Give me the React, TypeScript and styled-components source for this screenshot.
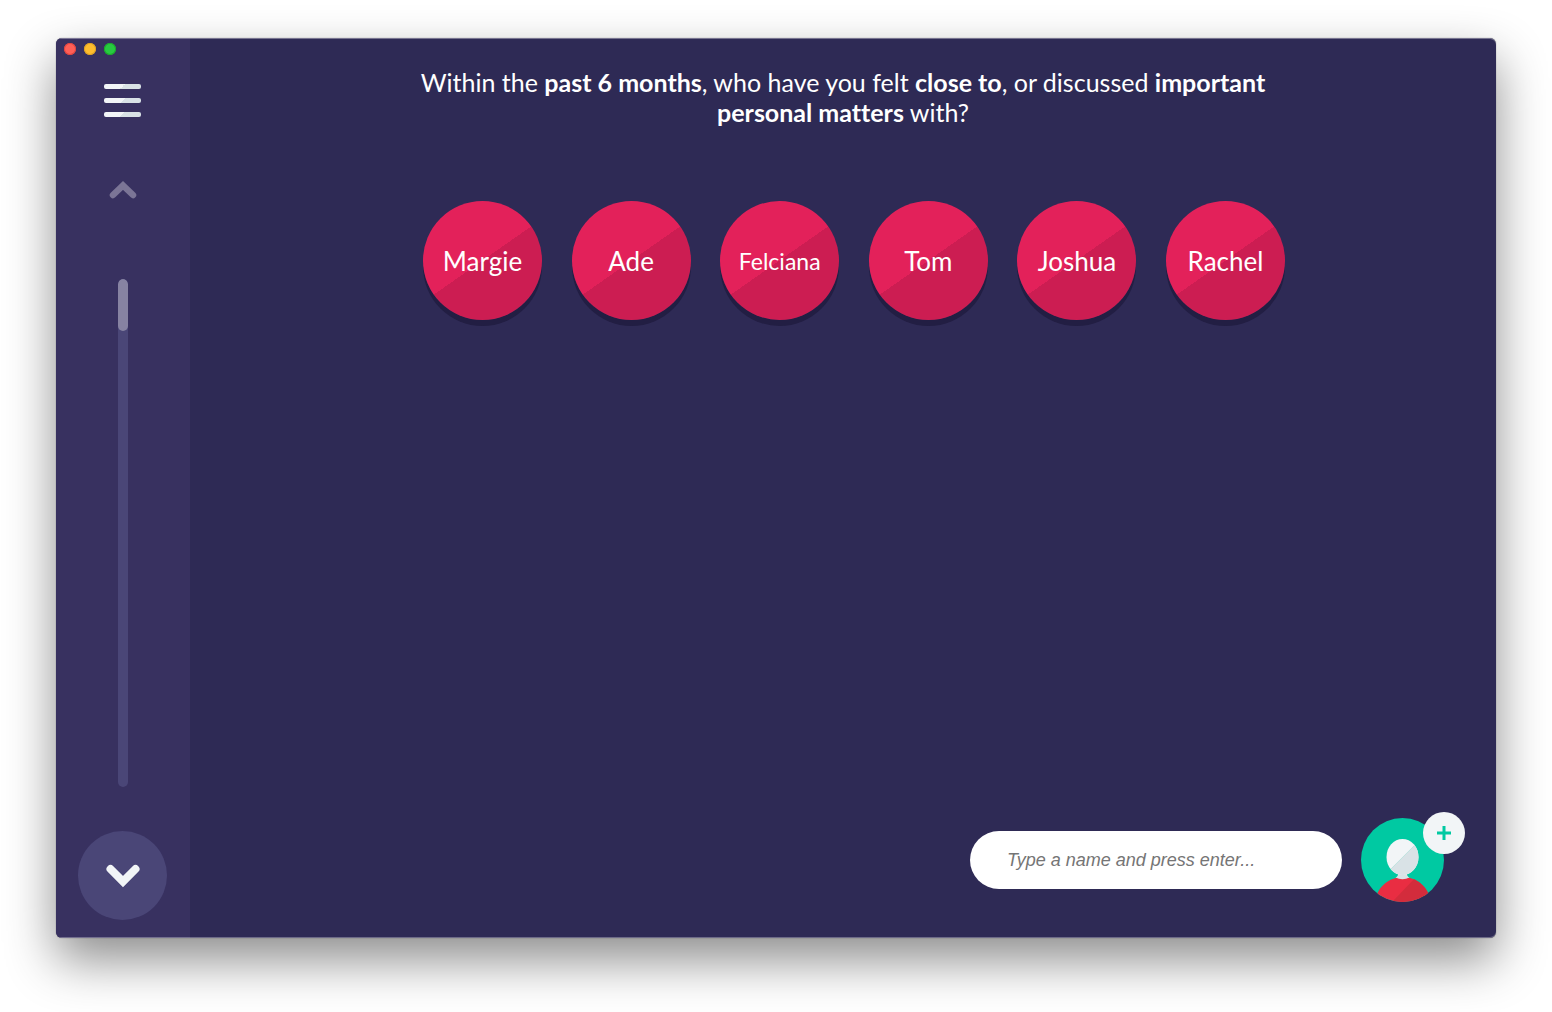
import React, { useState } from "react";
import styled, { createGlobalStyle } from "styled-components";

const GlobalStyle = createGlobalStyle`
  *, *::before, *::after { box-sizing: border-box; }
  body { margin: 0; background: #fff; font-family: Lato, sans-serif; }
  button { border: 0; padding: 0; background: none; font: inherit; cursor: pointer; }
`;

const Desktop = styled.div`
  display: flex;
  min-height: 100vh;
  padding: 38px 56px 74px;
`;

const Window = styled.div`
  flex: 1;
  display: flex;
  border-radius: 6px;
  overflow: hidden;
  background: #2e2a55;
  box-shadow: 0 0 1px rgba(0, 0, 0, 0.6), 0 22px 50px rgba(0, 0, 0, 0.45),
    inset 0 1px 0 rgba(255, 255, 255, 0.35), inset 0 -1px 0 rgba(255, 255, 255, 0.3);
`;

const Sidebar = styled.nav`
  flex: none;
  width: 134px;
  padding: 5px 9px 18px 8px;
  display: flex;
  flex-direction: column;
  align-items: center;
  background: #383160;
  box-shadow: inset 0 1px 0 rgba(255, 255, 255, 0.35), inset 0 -1px 0 rgba(255, 255, 255, 0.3);
`;

const Lights = styled.div`
  align-self: flex-start;
  display: flex;
  gap: 8px;
`;

const Light = styled.button<{ $fill: string; $edge: string }>`
  width: 12px;
  height: 12px;
  border-radius: 50%;
  background: ${(p) => p.$fill};
  box-shadow: inset 0 0 0 1px ${(p) => p.$edge};
`;

const MenuButton = styled.button`
  margin-top: 29px;
  display: grid;
  gap: 9px;
`;

const MenuBar = styled.span`
  width: 37px;
  height: 5px;
  border-radius: 2px;
  background: linear-gradient(135deg, #f2f5f7 50%, #d9e2e6 50%);
`;

const BackButton = styled.button`
  margin-top: 64px;
  height: 18px;
  color: #7b7596;
  svg { display: block; }
`;

const Track = styled.div`
  flex: 1;
  width: 10px;
  margin: 80px 0 44px;
  border-radius: 5px;
  overflow: hidden;
  background: #4a4677;
`;

const TrackFill = styled.div`
  border-radius: 5px;
  background: #8783a2;
`;

const NextButton = styled.button`
  width: 89px;
  height: 89px;
  border-radius: 50%;
  display: grid;
  place-items: center;
  background: #4a4677;
  color: #f2f5f7;
`;

const Main = styled.main`
  flex: 1;
  min-width: 0;
  display: flex;
  flex-direction: column;
  padding: 29px 31px 36px;
`;

const Prompt = styled.h1`
  max-width: 880px;
  margin: 0 auto;
  color: #fff;
  font-size: 25px;
  font-weight: 400;
  font-variant-ligatures: none;
  line-height: 30px;
  text-align: center;
`;

const People = styled.ul`
  flex: 1;
  display: flex;
  align-content: flex-start;
  align-items: flex-start;
  justify-content: space-between;
  width: 100%;
  max-width: 884px;
  margin: 74px auto 0;
  padding: 0 0 0 22px;
  list-style: none;
`;

const Person = styled.li<{ $small?: boolean }>`
  width: 119px;
  height: 119px;
  border-radius: 50%;
  display: grid;
  place-items: center;
  color: #fff;
  font-size: ${(p) => (p.$small ? 23 : 26)}px;
  background: linear-gradient(145deg, #e3215a 50%, #cc1d52 50%);
  box-shadow: 0 6px 0 #221e43;
`;

const AddBar = styled.form`
  display: flex;
  align-items: center;
  justify-content: flex-end;
  gap: 19px;
  padding-right: 21px;
`;

const NameInput = styled.input`
  width: 372px;
  height: 58px;
  padding: 0 37px;
  border: 0;
  border-radius: 29px;
  background: #fff;
  color: #333;
  font: italic 18px "Liberation Sans", Arial, sans-serif;
  &::placeholder { color: #757575; opacity: 1; }
`;

const AddButton = styled.button`
  position: relative;
  width: 83px;
  height: 84px;
  svg { display: block; }
`;

const Badge = styled.span`
  position: absolute;
  top: -6px;
  right: -21px;
  width: 42px;
  height: 42px;
  border-radius: 50%;
  display: grid;
  place-items: center;
  background: #f2f5f7;
`;

const people = ["Margie", "Ade", "Felciana", "Tom", "Joshua", "Rachel"];

function Avatar() {
  return (
    <svg width="83" height="84" viewBox="0 0 83 84" aria-hidden="true">
      <defs>
        <clipPath id="disc"><ellipse cx="41.5" cy="42" rx="41.5" ry="42" /></clipPath>
        <clipPath id="shade"><path d="M0 80.5 L80.5 0 H83 V84 H0Z" /></clipPath>
        <clipPath id="bodyShade"><path d="M33 82 L56 58 H83 V84 H31Z" /></clipPath>
      </defs>
      <g clipPath="url(#disc)">
        <rect width="83" height="84" fill="#00c9a2" />
        <path d="M14 84 C16 68 29 59 42 59 S67 68 70 84Z" fill="#e92d42" />
        <path d="M14 84 C16 68 29 59 42 59 S67 68 70 84Z" fill="#d32c3c" clipPath="url(#bodyShade)" />
        <path d="M37 53 V57 Q36 59 34.5 59.5 Q41.5 63 48.5 59.5 Q47 59 46 57 V53Z" fill="#d9e2e6" />
        <ellipse cx="41.5" cy="39" rx="16" ry="18" fill="#f2f5f7" />
        <ellipse cx="41.5" cy="39" rx="16" ry="18" fill="#d9e2e6" clipPath="url(#shade)" />
        <path d="M30 51 L53 28" stroke="#a9e2d8" strokeWidth="0.5" />
      </g>
    </svg>
  );
}

export default function App() {
  const [name, setName] = useState("");
  return (
    <>
      <GlobalStyle />
      <Desktop>
        <Window>
          <Sidebar aria-label="Interview">
            <Lights>
              <Light type="button" aria-label="Close" $fill="#ff5f57" $edge="#e0443e" />
              <Light type="button" aria-label="Minimise" $fill="#ffbd2e" $edge="#dea123" />
              <Light type="button" aria-label="Zoom" $fill="#28ca41" $edge="#1aab29" />
            </Lights>
            <MenuButton type="button" aria-label="Menu">
              <MenuBar />
              <MenuBar />
              <MenuBar />
            </MenuButton>
            <BackButton type="button" aria-label="Back">
              <svg width="28" height="18" viewBox="0 0 28 18" fill="none" stroke="currentColor" strokeWidth="6.5" strokeLinecap="round">
                <path d="M4 14 L14 4.5 L24 14" />
              </svg>
            </BackButton>
            <Track role="progressbar" aria-label="Progress" aria-valuenow={10}>
              <TrackFill style={{ height: "10.2%" }} />
            </Track>
            <NextButton type="button" aria-label="Next">
              <svg width="34" height="24" viewBox="0 0 34 24" fill="none" stroke="currentColor" strokeWidth="8" strokeLinecap="round">
                <path d="M4.5 5 L17 17.5 L29.5 5" />
              </svg>
            </NextButton>
          </Sidebar>
          <Main>
            <Prompt>
              Within the <strong>past 6 months</strong>, who have you felt <strong>close to</strong>, or
              discussed <strong>important personal matters</strong> with?
            </Prompt>
            <People>
              {people.map((p) => (
                <Person key={p} $small={p.length > 7}>{p}</Person>
              ))}
            </People>
            <AddBar onSubmit={(e) => e.preventDefault()}>
              <NameInput
                aria-label="Name"
                placeholder="Type a name and press enter..."
                value={name}
                onChange={(e) => setName(e.target.value)}
              />
              <AddButton type="submit" aria-label="Add person">
                <Avatar />
                <Badge>
                  <svg width="14" height="14" viewBox="0 0 14 14" stroke="#00c9a2" strokeWidth="3" aria-hidden="true">
                    <path d="M7 0 V14 M0 7 H14" />
                  </svg>
                </Badge>
              </AddButton>
            </AddBar>
          </Main>
        </Window>
      </Desktop>
    </>
  );
}
